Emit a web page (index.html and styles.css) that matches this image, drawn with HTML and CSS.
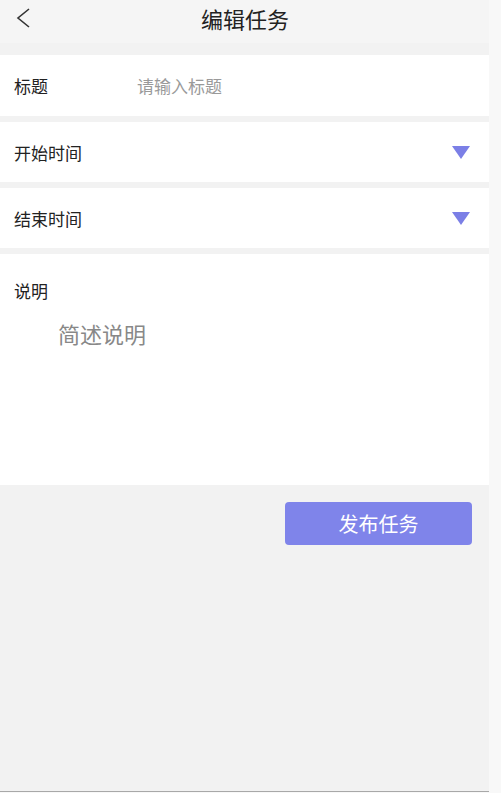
FILE: index.html
```html
<!DOCTYPE html>
<html lang="zh-CN">

<head>
    <meta charset="UTF-8">
    <meta name="viewport" content="width=device-width, initial-scale=1.0">
    <title>编辑任务</title>
    <link rel="stylesheet" href="styles.css">
</head>

<body>
    <div class="page">
        <header class="top-bar">
            <span class="back">
                <svg width="16" height="22" viewBox="0 0 16 22">
                    <path d="M14 2 L3 11 L14 20" fill="none" stroke="#333" stroke-width="1.6" />
                </svg>
            </span>
            <h1>编辑任务</h1>
        </header>

        <div class="form">
            <div class="row">
                <span class="label">标题</span>
                <span class="placeholder">请输入标题</span>
            </div>
            <div class="row">
                <span class="label">开始时间</span>
                <span class="arrow"></span>
            </div>
            <div class="row">
                <span class="label">结束时间</span>
                <span class="arrow"></span>
            </div>
            <div class="desc">
                <span class="label">说明</span>
                <div class="desc-input">简述说明</div>
            </div>
        </div>

        <div class="actions">
            <button class="publish">发布任务</button>
        </div>
    </div>
</body>

</html>
```

FILE: styles.css
```css
html,
body {
    height: 100%;
}

body {
    margin: 0;
    padding: 0;
    background-color: #f8f8f8;
    font-family: "Noto Sans CJK SC", "Liberation Sans", sans-serif;
    color: #222;
}

.page {
    width: 489px;
    min-height: 792px;
    background-color: #f2f2f2;
    border-bottom: 1px solid #a8a8a8;
    box-sizing: border-box;
}

.top-bar {
    position: relative;
    height: 43px;
    background-color: #f5f5f5;
    display: flex;
    align-items: flex-start;
    justify-content: center;
}

.top-bar h1 {
    margin: 0;
    font-size: 22px;
    line-height: 36px;
    font-weight: normal;
    color: #222;
    padding-left: 1px;
}

.back {
    position: absolute;
    left: 15px;
    top: 7px;
}

.form {
    padding-top: 12px;
    display: flex;
    flex-direction: column;
    gap: 6px;
}

.row {
    height: 60px;
    background-color: #fff;
    display: flex;
    align-items: center;
    padding: 0 19px 0 14px;
}

.row:first-child {
    height: 61px;
}

.label {
    font-size: 17px;
    color: #222;
}

.placeholder {
    margin-left: 89px;
    font-size: 17px;
    color: #9a9a9a;
}

.arrow {
    margin-left: auto;
    width: 0;
    height: 0;
    border-left: 9px solid transparent;
    border-right: 9px solid transparent;
    border-top: 13px solid #7b7fe6;
}

.desc {
    height: 231px;
    background-color: #fff;
    padding: 24px 14px 0;
    box-sizing: border-box;
}

.desc .label {
    display: block;
}

.desc-input {
    margin-top: 14px;
    margin-left: 44px;
    font-size: 22px;
    color: #888;
}

.actions {
    display: flex;
    justify-content: flex-end;
    padding: 17px 17px 0 0;
}

.publish {
    width: 187px;
    height: 43px;
    border: none;
    border-radius: 4px;
    background-color: #7f84ea;
    color: #fff;
    font-family: "Noto Sans CJK SC", "Liberation Sans", sans-serif;
    font-size: 20px;
    cursor: pointer;
}
```
